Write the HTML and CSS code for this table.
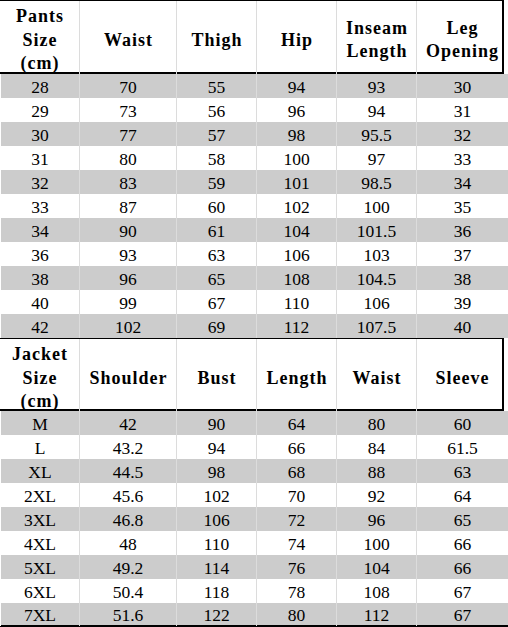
FILE: index.html
```html
<!DOCTYPE html>
<html>
<head>
<meta charset="utf-8">
<link rel="stylesheet" href="styles.css">
</head>
<body>
<div class="sheet">
  <div class="head first">
    <div class="hc">Pants<br>Size<br>(cm)</div>
    <div class="hc">Waist</div>
    <div class="hc">Thigh</div>
    <div class="hc">Hip</div>
    <div class="hc">Inseam<br>Length</div>
    <div class="hc last">Leg<br>Opening</div>
  </div>
  <div class="row g"><div>28</div><div>70</div><div>55</div><div>94</div><div>93</div><div>30</div></div>
  <div class="row"><div>29</div><div>73</div><div>56</div><div>96</div><div>94</div><div>31</div></div>
  <div class="row g"><div>30</div><div>77</div><div>57</div><div>98</div><div>95.5</div><div>32</div></div>
  <div class="row"><div>31</div><div>80</div><div>58</div><div>100</div><div>97</div><div>33</div></div>
  <div class="row g"><div>32</div><div>83</div><div>59</div><div>101</div><div>98.5</div><div>34</div></div>
  <div class="row"><div>33</div><div>87</div><div>60</div><div>102</div><div>100</div><div>35</div></div>
  <div class="row g"><div>34</div><div>90</div><div>61</div><div>104</div><div>101.5</div><div>36</div></div>
  <div class="row"><div>36</div><div>93</div><div>63</div><div>106</div><div>103</div><div>37</div></div>
  <div class="row g"><div>38</div><div>96</div><div>65</div><div>108</div><div>104.5</div><div>38</div></div>
  <div class="row"><div>40</div><div>99</div><div>67</div><div>110</div><div>106</div><div>39</div></div>
  <div class="row g"><div>42</div><div>102</div><div>69</div><div>112</div><div>107.5</div><div>40</div></div>

  <div class="head second">
    <div class="hc">Jacket<br>Size<br>(cm)</div>
    <div class="hc">Shoulder</div>
    <div class="hc">Bust</div>
    <div class="hc">Length</div>
    <div class="hc">Waist</div>
    <div class="hc last">Sleeve</div>
  </div>
  <div class="row g"><div>M</div><div>42</div><div>90</div><div>64</div><div>80</div><div>60</div></div>
  <div class="row"><div>L</div><div>43.2</div><div>94</div><div>66</div><div>84</div><div>61.5</div></div>
  <div class="row g"><div>XL</div><div>44.5</div><div>98</div><div>68</div><div>88</div><div>63</div></div>
  <div class="row"><div>2XL</div><div>45.6</div><div>102</div><div>70</div><div>92</div><div>64</div></div>
  <div class="row g"><div>3XL</div><div>46.8</div><div>106</div><div>72</div><div>96</div><div>65</div></div>
  <div class="row"><div>4XL</div><div>48</div><div>110</div><div>74</div><div>100</div><div>66</div></div>
  <div class="row g"><div>5XL</div><div>49.2</div><div>114</div><div>76</div><div>104</div><div>66</div></div>
  <div class="row"><div>6XL</div><div>50.4</div><div>118</div><div>78</div><div>108</div><div>67</div></div>
  <div class="row g last-row"><div>7XL</div><div>51.6</div><div>122</div><div>80</div><div>112</div><div>67</div></div>
</div>
</body>
</html>
```

FILE: styles.css
```css
html, body {
  margin: 0;
  padding: 0;
  background: #ffffff;
}

.sheet {
  width: 508px;
  display: flex;
  flex-direction: column;
  color: #000;
}

.head {
  width: 502px;
  display: grid;
  grid-template-columns: 80px 97px 80px 80px 80px 85px;
  border-right: 2px solid #000;
  border-bottom: 2px solid #000;
  font-family: "Liberation Serif", "DejaVu Serif", serif;
  font-weight: bold;
  font-size: 18px;
  letter-spacing: 1px;
  line-height: 23.5px;
}

.head.first {
  border-top: 1px solid #000;
  height: 71px;
}

.head.second {
  border-top: 1px solid #000;
  height: 70px;
}

.hc {
  display: flex;
  align-items: center;
  justify-content: center;
  text-align: center;
  border-right: 1px solid #dcdcdc;
  padding-top: 4px;
  padding-left: 1px;
}

.hc.last {
  border-right: none;
  padding-left: 6px;
}

.row {
  display: grid;
  grid-template-columns: 80px 97px 80px 80px 80px 91px;
  height: 24px;
  font-family: "Liberation Serif", "DejaVu Serif", serif;
  font-size: 17.5px;
  line-height: 24px;
  background: #ffffff;
}

.row.g {
  background: #cccccc;
}

.row > div {
  text-align: center;
  border-right: 1px solid #dcdcdc;
  padding-top: 1px;
}

.row > div:first-child {
  border-left: 1px solid #ffffff;
}

.row > div:last-child {
  border-right: none;
}

.row.last-row {
  height: 22px;
  line-height: 22px;
  border-bottom: 2px solid #000;
}
```
